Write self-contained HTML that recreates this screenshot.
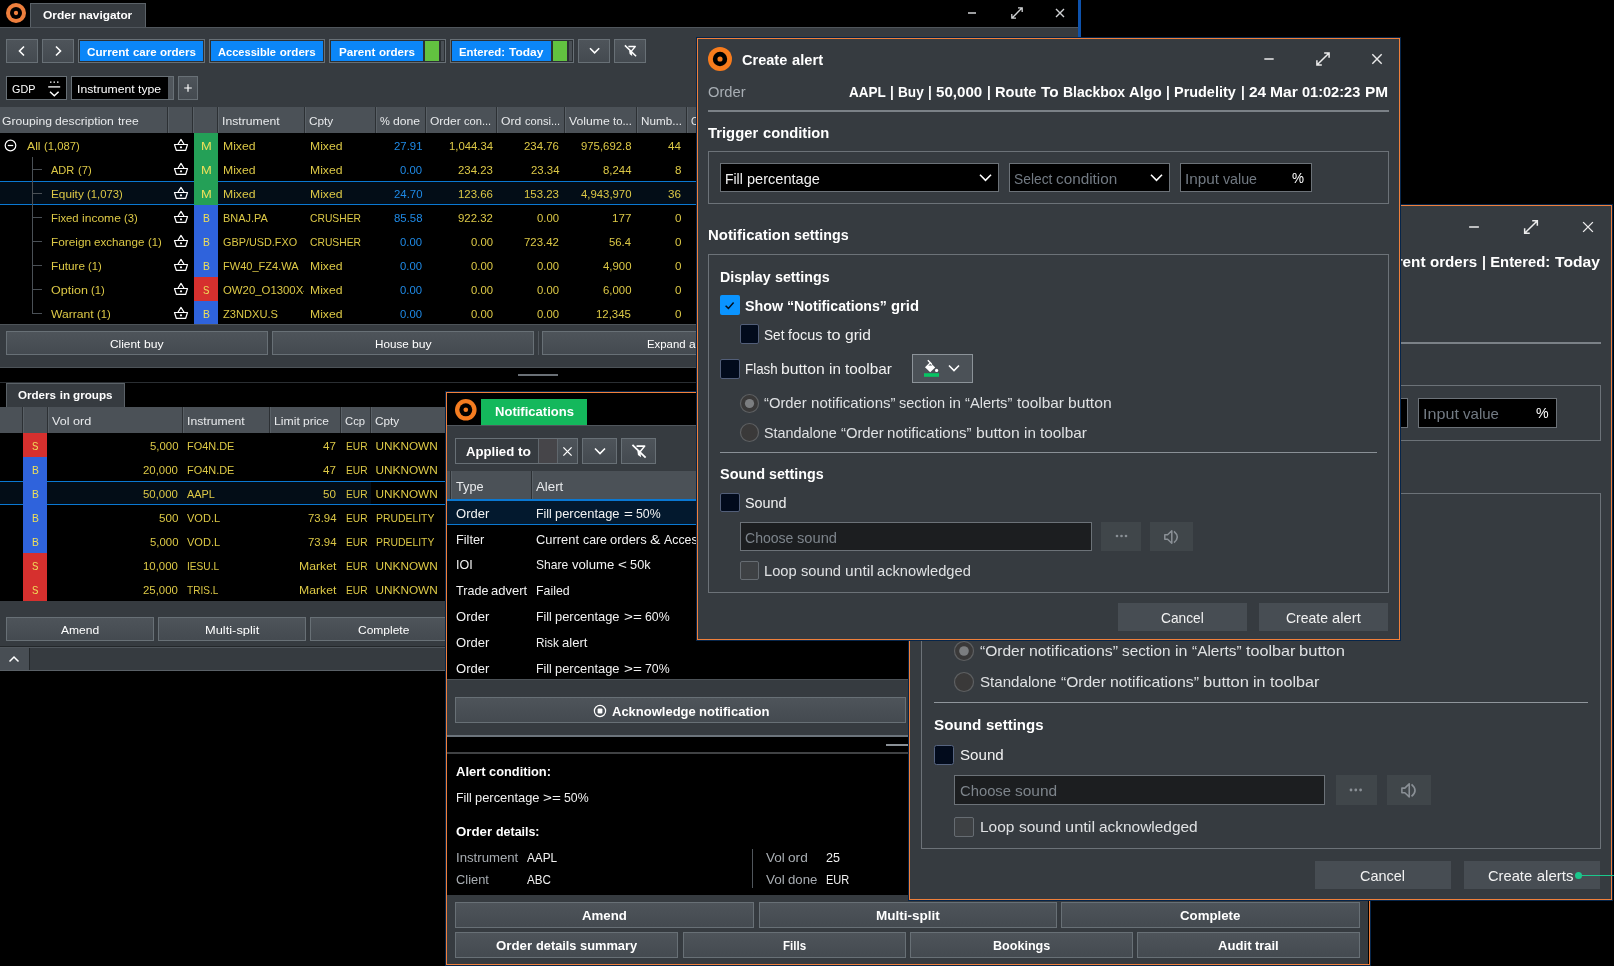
<!DOCTYPE html>
<html><head><meta charset="utf-8"><title>Order navigator</title><style>
html,body{margin:0;padding:0;background:#000;}
body{width:1614px;height:966px;overflow:hidden;position:relative;font-family:"Liberation Sans",sans-serif;color:#fff;}
div,span,svg{position:absolute;}
.win{position:absolute;will-change:transform;}
.t{white-space:pre;line-height:20px;height:20px;font-size:12px;color:#fff;transform-origin:0 50%;}
.t .in{position:relative;display:inline-block;}
.b{font-weight:bold;}
.g{font-size:11.80px;}
.f12{font-size:11.60px;}
.f12c{font-size:11.60px;}
.f12o{font-size:11.60px;}
.n{font-size:12.70px;}
.f13n{font-size:12.50px;}
.d1{font-size:14.30px;}
.d1b{font-size:14.10px;}
.d1t{font-size:14.10px;}
.d2{font-size:15.00px;}
.d2b{font-size:14.80px;}
</style></head><body>
<div class="win" style="left:0;top:0;width:1614px;height:966px;">
<svg style="left:5px;top:2px" width="22" height="22" viewBox="-11 -11 22 22"><circle r="10" fill="#ee7f3d"/><circle r="6.00" fill="#000"/><circle r="2.15" fill="#ee7f3d"/></svg>
<div style="left:30px;top:3px;width:116px;height:25px;background:#363b40;border:1px solid #5b6268;box-sizing:border-box;border-bottom:none;"></div>
<span class="t b f12" style="top:5px;left:43.00px;transform:scaleX(1.037);">Order</span>
<span class="t b f12" style="top:5px;left:79.24px;transform:scaleX(1.020);">navigator</span>
<svg style="left:966.2px;top:7px" width="12" height="12" viewBox="0 0 12 12"><path d="M2.0 6 H10.0" stroke="#d0d2d4" stroke-width="1.5"/></svg>
<svg style="left:1008.5px;top:5px" width="16" height="16" viewBox="0 0 16 16"><path d="M2.8 13.2 L13.2 2.8 M9.0 2.8 H13.2 V7.0 M2.8 9.0 V13.2 H7.0" fill="none" stroke="#d0d2d4" stroke-width="1.3"/></svg>
<svg style="left:1054.2px;top:7px" width="12" height="12" viewBox="0 0 12 12"><path d="M2.0 2.0 L10.0 10.0 M10.0 2.0 L2.0 10.0" stroke="#d0d2d4" stroke-width="1.4"/></svg>
<div style="left:1078px;top:0px;width:3px;height:37px;background:#0e52ac;"></div>
<div style="left:0px;top:27px;width:1078px;height:81px;background:#363b40;"></div>
<div style="left:0px;top:27px;width:1078px;height:1px;background:#50565c;"></div>
<div style="left:6px;top:39px;width:32px;height:24px;border:1px solid #687076;box-sizing:border-box;background:linear-gradient(#4e545a,#444a50);"></div>
<div style="left:42px;top:39px;width:32px;height:24px;border:1px solid #687076;box-sizing:border-box;background:linear-gradient(#4e545a,#444a50);"></div>
<svg style="left:16px;top:45px" width="12" height="12" viewBox="0 0 12 12"><path d="M8 1.5 L3.5 6 L8 10.5" fill="none" stroke="#fff" stroke-width="1.6"/></svg>
<svg style="left:52px;top:45px" width="12" height="12" viewBox="0 0 12 12"><path d="M4 1.5 L8.5 6 L4 10.5" fill="none" stroke="#fff" stroke-width="1.6"/></svg>
<div style="left:78px;top:39px;width:127px;height:24px;background:#2b3034;border:1px solid #687076;box-sizing:border-box;"></div>
<div style="left:80px;top:41px;width:123px;height:20px;background:#0b86f8;"></div>
<span class="t b f12c" style="top:42px;left:87.08px;transform:scaleX(1.009);">Current</span>
<span class="t b f12c" style="top:42px;left:132.86px;transform:scaleX(0.986);">care</span>
<span class="t b f12c" style="top:42px;left:159.90px;">orders</span>
<div style="left:209px;top:39px;width:116px;height:24px;background:#2b3034;border:1px solid #687076;box-sizing:border-box;"></div>
<div style="left:211px;top:41px;width:112px;height:20px;background:#0b86f8;"></div>
<span class="t b f12c" style="top:42px;left:218.26px;transform:scaleX(0.956);">Accessible</span>
<span class="t b f12c" style="top:42px;left:279.72px;">orders</span>
<div style="left:329px;top:39px;width:117px;height:24px;background:#2b3034;border:1px solid #687076;box-sizing:border-box;"></div>
<div style="left:331px;top:41px;width:92px;height:20px;background:#0b86f8;"></div>
<div style="left:425px;top:41px;width:14px;height:20px;background:#62c240;"></div>
<div style="left:441px;top:41px;width:3px;height:20px;background:#4a5056;"></div>
<span class="t b f12c" style="top:42px;left:339.07px;transform:scaleX(1.007);">Parent</span>
<span class="t b f12c" style="top:42px;left:378.91px;">orders</span>
<div style="left:450px;top:39px;width:124px;height:24px;background:#2b3034;border:1px solid #687076;box-sizing:border-box;"></div>
<div style="left:452px;top:41px;width:99px;height:20px;background:#0b86f8;"></div>
<div style="left:553px;top:41px;width:14px;height:20px;background:#62c240;"></div>
<div style="left:569px;top:41px;width:3px;height:20px;background:#4a5056;"></div>
<span class="t b f12c" style="top:42px;left:459.49px;transform:scaleX(0.980);">Entered:</span>
<span class="t b f12c" style="top:42px;left:509.13px;transform:scaleX(1.032);">Today</span>
<div style="left:578px;top:39px;width:32px;height:24px;border:1px solid #687076;box-sizing:border-box;background:linear-gradient(#4e545a,#444a50);"></div>
<svg style="left:587.8px;top:44.4px" width="13.2" height="13.2" viewBox="0 0 13.2 13.2"><path d="M2 4.3 L6.6 8.899999999999999 L11.2 4.3" fill="none" stroke="#fff" stroke-width="1.6"/></svg>
<div style="left:614px;top:39px;width:32px;height:24px;border:1px solid #687076;box-sizing:border-box;background:linear-gradient(#4e545a,#444a50);"></div>
<svg style="left:622.0px;top:43.0px" width="16.0" height="16.0" viewBox="0 0 16 16"><path d="M6.4 3.5 H13.3 L9.4 8.2" fill="none" stroke="#fff" stroke-width="1.3" stroke-linejoin="round"/><path d="M7.1 7.7 L9.7 7.9 L10.2 12.9 L7.6 11 Z" fill="#fff"/><path d="M2.9 2.4 L14.1 13.3" stroke="#fff" stroke-width="1.5"/></svg>
<div style="left:6px;top:76px;width:61px;height:24px;background:#000;border:1px solid #687076;box-sizing:border-box;"></div>
<span class="t g" style="top:79px;left:12.00px;transform:scaleX(0.914);">GDP</span>
<svg style="left:47px;top:80px" width="14" height="18" viewBox="0 0 14 18"><path d="M3 2.2h1.5M6.5 2.2h1.5M10 2.2h1.5" stroke="#fff" stroke-width="1.3"/><path d="M1.2 6.9 H13.2" stroke="#fff" stroke-width="1.3"/><path d="M3 11.8 L7.3 15.8 L11.6 11.8" fill="none" stroke="#fff" stroke-width="1.5"/></svg>
<div style="left:71px;top:76px;width:103px;height:24px;background:#000;border:1px solid #687076;box-sizing:border-box;"></div>
<div style="left:168px;top:77px;width:5px;height:22px;background:#50565c;"></div>
<span class="t g" style="top:78.5px;left:77.00px;transform:scaleX(1.033);">Instrument</span>
<span class="t g" style="top:78.5px;left:137.85px;transform:scaleX(1.040);">type</span>
<div style="left:178px;top:76px;width:20px;height:24px;border:1px solid #687076;box-sizing:border-box;background:linear-gradient(#4e545a,#444a50);"></div>
<svg style="left:182.1px;top:81.8px" width="12" height="12" viewBox="0 0 12 12"><path d="M6 2.2 V9.8 M2.2 6 H9.8" stroke="#fff" stroke-width="1.2"/></svg>
<div style="left:0px;top:107px;width:1078px;height:26px;background:#4b5157;"></div>
<div style="left:167px;top:107px;width:1px;height:26px;background:#2c3034;"></div>
<div style="left:168px;top:107px;width:1px;height:26px;background:#596066;"></div>
<div style="left:192px;top:107px;width:1px;height:26px;background:#2c3034;"></div>
<div style="left:193px;top:107px;width:1px;height:26px;background:#596066;"></div>
<div style="left:217px;top:107px;width:1px;height:26px;background:#2c3034;"></div>
<div style="left:218px;top:107px;width:1px;height:26px;background:#596066;"></div>
<div style="left:304px;top:107px;width:1px;height:26px;background:#2c3034;"></div>
<div style="left:305px;top:107px;width:1px;height:26px;background:#596066;"></div>
<div style="left:375px;top:107px;width:1px;height:26px;background:#2c3034;"></div>
<div style="left:376px;top:107px;width:1px;height:26px;background:#596066;"></div>
<div style="left:425px;top:107px;width:1px;height:26px;background:#2c3034;"></div>
<div style="left:426px;top:107px;width:1px;height:26px;background:#596066;"></div>
<div style="left:496px;top:107px;width:1px;height:26px;background:#2c3034;"></div>
<div style="left:497px;top:107px;width:1px;height:26px;background:#596066;"></div>
<div style="left:564px;top:107px;width:1px;height:26px;background:#2c3034;"></div>
<div style="left:565px;top:107px;width:1px;height:26px;background:#596066;"></div>
<div style="left:636px;top:107px;width:1px;height:26px;background:#2c3034;"></div>
<div style="left:637px;top:107px;width:1px;height:26px;background:#596066;"></div>
<div style="left:686px;top:107px;width:1px;height:26px;background:#2c3034;"></div>
<div style="left:687px;top:107px;width:1px;height:26px;background:#596066;"></div>
<span class="t g" style="top:111px;left:2.00px;color:#e8eaec;transform:scaleX(1.031);">Grouping</span>
<span class="t g" style="top:111px;left:55.33px;color:#e8eaec;transform:scaleX(1.032);">description</span>
<span class="t g" style="top:111px;left:117.52px;color:#e8eaec;transform:scaleX(1.023);">tree</span>
<span class="t g" style="top:111px;left:222.00px;color:#e8eaec;transform:scaleX(1.033);">Instrument</span>
<span class="t g" style="top:111px;left:309.00px;color:#e8eaec;">Cpty</span>
<span class="t g" style="top:111px;left:380.00px;color:#e8eaec;transform:scaleX(0.936);">%</span>
<span class="t g" style="top:111px;left:393.11px;color:#e8eaec;transform:scaleX(1.035);">done</span>
<span class="t g" style="top:111px;left:430.00px;color:#e8eaec;transform:scaleX(1.019);">Order</span>
<span class="t g" style="top:111px;left:464.03px;color:#e8eaec;transform:scaleX(0.941);">con...</span>
<span class="t g" style="top:111px;left:501.00px;color:#e8eaec;transform:scaleX(1.032);">Ord</span>
<span class="t g" style="top:111px;left:524.58px;color:#e8eaec;transform:scaleX(0.941);">consi...</span>
<span class="t g" style="top:111px;left:569.00px;color:#e8eaec;transform:scaleX(1.037);">Volume</span>
<span class="t g" style="top:111px;left:613.10px;color:#e8eaec;transform:scaleX(0.961);">to...</span>
<span class="t g" style="top:111px;left:641.00px;color:#e8eaec;transform:scaleX(0.991);">Numb...</span>
<span class="t g" style="top:111px;left:691.00px;color:#e8eaec;transform:scaleX(0.872);">C</span>
<div style="left:0px;top:133px;width:1077px;height:192px;background:#000;"></div>
<svg style="left:4px;top:139px" width="13" height="13" viewBox="0 0 13 13"><circle cx="6.5" cy="6.5" r="5.3" fill="none" stroke="#fff" stroke-width="1.2"/><path d="M3.8 6.5 H9.2" stroke="#fff" stroke-width="1.2"/></svg>
<span class="t g" style="top:136px;left:27.00px;color:#dcc846;transform:scaleX(1.033);">All</span>
<span class="t g" style="top:136px;left:43.84px;color:#dcc846;transform:scaleX(0.955);">(1,087)</span>
<svg style="left:173.3px;top:137.7px" width="16" height="14" viewBox="0 0 16 14"><path d="M1.5 6.5 H14.5 L12.7 12.3 H3.3 Z M4.8 6.5 L8 1.4 L11.2 6.5" fill="none" stroke="#fff" stroke-width="1.2" stroke-linejoin="round"/><circle cx="8" cy="9.3" r="1.1" fill="#fff"/></svg>
<div style="left:194px;top:133px;width:24px;height:24px;background:#24a057;"></div>
<span class="t g" style="top:136px;left:201.22px;color:#efe05a;transform:scaleX(1.096);">M</span>
<span class="t g" style="top:136px;left:223px;color:#dcc846;width:81px;overflow:hidden;"><span class="in" style="transform:scaleX(1.033);transform-origin:0 50%;">Mixed</span></span>
<span class="t g" style="top:136px;left:310.00px;color:#dcc846;transform:scaleX(1.033);">Mixed</span>
<span class="t g" style="top:136px;left:393.52px;color:#1f8ae6;transform:scaleX(0.964);">27.91</span>
<span class="t g" style="top:136px;left:448.98px;color:#dcc846;transform:scaleX(0.958);">1,044.34</span>
<span class="t g" style="top:136px;left:524.05px;color:#dcc846;transform:scaleX(0.968);">234.76</span>
<span class="t g" style="top:136px;left:580.52px;color:#dcc846;transform:scaleX(0.962);">975,692.8</span>
<span class="t g" style="top:136px;left:668.06px;color:#dcc846;transform:scaleX(0.986);">44</span>
<div style="left:32px;top:157px;width:1px;height:24px;background:#4a5056;"></div>
<div style="left:32px;top:169px;width:10px;height:1px;background:#4a5056;"></div>
<span class="t g" style="top:160px;left:51.00px;color:#dcc846;transform:scaleX(0.937);">ADR</span>
<span class="t g" style="top:160px;left:77.62px;color:#dcc846;transform:scaleX(0.951);">(7)</span>
<svg style="left:173.3px;top:161.7px" width="16" height="14" viewBox="0 0 16 14"><path d="M1.5 6.5 H14.5 L12.7 12.3 H3.3 Z M4.8 6.5 L8 1.4 L11.2 6.5" fill="none" stroke="#fff" stroke-width="1.2" stroke-linejoin="round"/><circle cx="8" cy="9.3" r="1.1" fill="#fff"/></svg>
<div style="left:194px;top:157px;width:24px;height:24px;background:#24a057;"></div>
<span class="t g" style="top:160px;left:201.22px;color:#efe05a;transform:scaleX(1.096);">M</span>
<span class="t g" style="top:160px;left:223px;color:#dcc846;width:81px;overflow:hidden;"><span class="in" style="transform:scaleX(1.033);transform-origin:0 50%;">Mixed</span></span>
<span class="t g" style="top:160px;left:310.00px;color:#dcc846;transform:scaleX(1.033);">Mixed</span>
<span class="t g" style="top:160px;left:399.99px;color:#1f8ae6;transform:scaleX(0.958);">0.00</span>
<span class="t g" style="top:160px;left:458.05px;color:#dcc846;transform:scaleX(0.968);">234.23</span>
<span class="t g" style="top:160px;left:530.52px;color:#dcc846;transform:scaleX(0.964);">23.34</span>
<span class="t g" style="top:160px;left:602.52px;color:#dcc846;transform:scaleX(0.964);">8,244</span>
<span class="t g" style="top:160px;left:674.53px;color:#dcc846;transform:scaleX(0.986);">8</span>
<div style="left:0px;top:181px;width:1077px;height:24px;background:#030d17;"></div>
<div style="left:0px;top:181px;width:1077px;height:1px;background:#0a78d2;"></div>
<div style="left:0px;top:204px;width:1077px;height:1px;background:#0a78d2;"></div>
<div style="left:32px;top:181px;width:1px;height:24px;background:#4a5056;"></div>
<div style="left:32px;top:193px;width:10px;height:1px;background:#4a5056;"></div>
<span class="t g" style="top:184px;left:51.00px;color:#dcc846;">Equity</span>
<span class="t g" style="top:184px;left:86.97px;color:#dcc846;transform:scaleX(0.955);">(1,073)</span>
<svg style="left:173.3px;top:185.7px" width="16" height="14" viewBox="0 0 16 14"><path d="M1.5 6.5 H14.5 L12.7 12.3 H3.3 Z M4.8 6.5 L8 1.4 L11.2 6.5" fill="none" stroke="#fff" stroke-width="1.2" stroke-linejoin="round"/><circle cx="8" cy="9.3" r="1.1" fill="#fff"/></svg>
<div style="left:194px;top:181px;width:24px;height:24px;background:#24a057;"></div>
<span class="t g" style="top:184px;left:201.22px;color:#efe05a;transform:scaleX(1.096);">M</span>
<span class="t g" style="top:184px;left:223px;color:#dcc846;width:81px;overflow:hidden;"><span class="in" style="transform:scaleX(1.033);transform-origin:0 50%;">Mixed</span></span>
<span class="t g" style="top:184px;left:310.00px;color:#dcc846;transform:scaleX(1.033);">Mixed</span>
<span class="t g" style="top:184px;left:393.52px;color:#1f8ae6;transform:scaleX(0.964);">24.70</span>
<span class="t g" style="top:184px;left:458.05px;color:#dcc846;transform:scaleX(0.968);">123.66</span>
<span class="t g" style="top:184px;left:524.05px;color:#dcc846;transform:scaleX(0.968);">153.23</span>
<span class="t g" style="top:184px;left:580.52px;color:#dcc846;transform:scaleX(0.962);">4,943,970</span>
<span class="t g" style="top:184px;left:668.06px;color:#dcc846;transform:scaleX(0.986);">36</span>
<div style="left:32px;top:205px;width:1px;height:24px;background:#4a5056;"></div>
<div style="left:32px;top:217px;width:10px;height:1px;background:#4a5056;"></div>
<span class="t g" style="top:208px;left:51.00px;color:#dcc846;transform:scaleX(0.957);">Fixed</span>
<span class="t g" style="top:208px;left:81.89px;color:#dcc846;transform:scaleX(1.022);">income</span>
<span class="t g" style="top:208px;left:124.05px;color:#dcc846;transform:scaleX(0.951);">(3)</span>
<svg style="left:173.3px;top:209.7px" width="16" height="14" viewBox="0 0 16 14"><path d="M1.5 6.5 H14.5 L12.7 12.3 H3.3 Z M4.8 6.5 L8 1.4 L11.2 6.5" fill="none" stroke="#fff" stroke-width="1.2" stroke-linejoin="round"/><circle cx="8" cy="9.3" r="1.1" fill="#fff"/></svg>
<div style="left:194px;top:205px;width:24px;height:24px;background:#2f63dc;"></div>
<span class="t g" style="top:208px;left:203.16px;color:#efe05a;transform:scaleX(0.874);">B</span>
<span class="t g" style="top:208px;left:223px;color:#dcc846;width:81px;overflow:hidden;"><span class="in" style="transform:scaleX(0.930);transform-origin:0 50%;">BNAJ.PA</span></span>
<span class="t g" style="top:208px;left:310.00px;color:#dcc846;transform:scaleX(0.874);">CRUSHER</span>
<span class="t g" style="top:208px;left:393.52px;color:#1f8ae6;transform:scaleX(0.964);">85.58</span>
<span class="t g" style="top:208px;left:458.05px;color:#dcc846;transform:scaleX(0.968);">922.32</span>
<span class="t g" style="top:208px;left:536.99px;color:#dcc846;transform:scaleX(0.958);">0.00</span>
<span class="t g" style="top:208px;left:611.59px;color:#dcc846;transform:scaleX(0.986);">177</span>
<span class="t g" style="top:208px;left:674.53px;color:#dcc846;transform:scaleX(0.986);">0</span>
<div style="left:32px;top:229px;width:1px;height:24px;background:#4a5056;"></div>
<div style="left:32px;top:241px;width:10px;height:1px;background:#4a5056;"></div>
<span class="t g" style="top:232px;left:51.00px;color:#dcc846;">Foreign</span>
<span class="t g" style="top:232px;left:94.38px;color:#dcc846;transform:scaleX(0.984);">exchange</span>
<span class="t g" style="top:232px;left:148.01px;color:#dcc846;transform:scaleX(0.951);">(1)</span>
<svg style="left:173.3px;top:233.7px" width="16" height="14" viewBox="0 0 16 14"><path d="M1.5 6.5 H14.5 L12.7 12.3 H3.3 Z M4.8 6.5 L8 1.4 L11.2 6.5" fill="none" stroke="#fff" stroke-width="1.2" stroke-linejoin="round"/><circle cx="8" cy="9.3" r="1.1" fill="#fff"/></svg>
<div style="left:194px;top:229px;width:24px;height:24px;background:#2f63dc;"></div>
<span class="t g" style="top:232px;left:203.16px;color:#efe05a;transform:scaleX(0.874);">B</span>
<span class="t g" style="top:232px;left:223px;color:#dcc846;width:81px;overflow:hidden;"><span class="in" style="transform:scaleX(0.919);transform-origin:0 50%;">GBP/USD.FXO</span></span>
<span class="t g" style="top:232px;left:310.00px;color:#dcc846;transform:scaleX(0.874);">CRUSHER</span>
<span class="t g" style="top:232px;left:399.99px;color:#1f8ae6;transform:scaleX(0.958);">0.00</span>
<span class="t g" style="top:232px;left:470.99px;color:#dcc846;transform:scaleX(0.958);">0.00</span>
<span class="t g" style="top:232px;left:524.05px;color:#dcc846;transform:scaleX(0.968);">723.42</span>
<span class="t g" style="top:232px;left:608.99px;color:#dcc846;transform:scaleX(0.958);">56.4</span>
<span class="t g" style="top:232px;left:674.53px;color:#dcc846;transform:scaleX(0.986);">0</span>
<div style="left:32px;top:253px;width:1px;height:24px;background:#4a5056;"></div>
<div style="left:32px;top:265px;width:10px;height:1px;background:#4a5056;"></div>
<span class="t g" style="top:256px;left:51.00px;color:#dcc846;transform:scaleX(0.995);">Future</span>
<span class="t g" style="top:256px;left:88.22px;color:#dcc846;transform:scaleX(0.951);">(1)</span>
<svg style="left:173.3px;top:257.7px" width="16" height="14" viewBox="0 0 16 14"><path d="M1.5 6.5 H14.5 L12.7 12.3 H3.3 Z M4.8 6.5 L8 1.4 L11.2 6.5" fill="none" stroke="#fff" stroke-width="1.2" stroke-linejoin="round"/><circle cx="8" cy="9.3" r="1.1" fill="#fff"/></svg>
<div style="left:194px;top:253px;width:24px;height:24px;background:#2f63dc;"></div>
<span class="t g" style="top:256px;left:203.16px;color:#efe05a;transform:scaleX(0.874);">B</span>
<span class="t g" style="top:256px;left:223px;color:#dcc846;width:81px;overflow:hidden;"><span class="in" style="transform:scaleX(0.936);transform-origin:0 50%;">FW40_FZ4.WA</span></span>
<span class="t g" style="top:256px;left:310.00px;color:#dcc846;transform:scaleX(1.033);">Mixed</span>
<span class="t g" style="top:256px;left:399.99px;color:#1f8ae6;transform:scaleX(0.958);">0.00</span>
<span class="t g" style="top:256px;left:470.99px;color:#dcc846;transform:scaleX(0.958);">0.00</span>
<span class="t g" style="top:256px;left:536.99px;color:#dcc846;transform:scaleX(0.958);">0.00</span>
<span class="t g" style="top:256px;left:602.52px;color:#dcc846;transform:scaleX(0.964);">4,900</span>
<span class="t g" style="top:256px;left:674.53px;color:#dcc846;transform:scaleX(0.986);">0</span>
<div style="left:32px;top:277px;width:1px;height:24px;background:#4a5056;"></div>
<div style="left:32px;top:289px;width:10px;height:1px;background:#4a5056;"></div>
<span class="t g" style="top:280px;left:51.00px;color:#dcc846;transform:scaleX(1.061);">Option</span>
<span class="t g" style="top:280px;left:91.18px;color:#dcc846;transform:scaleX(0.951);">(1)</span>
<svg style="left:173.3px;top:281.7px" width="16" height="14" viewBox="0 0 16 14"><path d="M1.5 6.5 H14.5 L12.7 12.3 H3.3 Z M4.8 6.5 L8 1.4 L11.2 6.5" fill="none" stroke="#fff" stroke-width="1.2" stroke-linejoin="round"/><circle cx="8" cy="9.3" r="1.1" fill="#fff"/></svg>
<div style="left:194px;top:277px;width:24px;height:24px;background:#d6302e;"></div>
<span class="t g" style="top:280px;left:203.42px;color:#efe05a;transform:scaleX(0.809);">S</span>
<span class="t g" style="top:280px;left:223px;color:#dcc846;width:81px;overflow:hidden;"><span class="in" style="transform:scaleX(0.964);transform-origin:0 50%;">OW20_O1300X4</span></span>
<span class="t g" style="top:280px;left:310.00px;color:#dcc846;transform:scaleX(1.033);">Mixed</span>
<span class="t g" style="top:280px;left:399.99px;color:#1f8ae6;transform:scaleX(0.958);">0.00</span>
<span class="t g" style="top:280px;left:470.99px;color:#dcc846;transform:scaleX(0.958);">0.00</span>
<span class="t g" style="top:280px;left:536.99px;color:#dcc846;transform:scaleX(0.958);">0.00</span>
<span class="t g" style="top:280px;left:602.52px;color:#dcc846;transform:scaleX(0.964);">6,000</span>
<span class="t g" style="top:280px;left:674.53px;color:#dcc846;transform:scaleX(0.986);">0</span>
<div style="left:32px;top:301px;width:1px;height:12px;background:#4a5056;"></div>
<div style="left:32px;top:313px;width:10px;height:1px;background:#4a5056;"></div>
<span class="t g" style="top:304px;left:51.00px;color:#dcc846;transform:scaleX(1.026);">Warrant</span>
<span class="t g" style="top:304px;left:96.91px;color:#dcc846;transform:scaleX(0.951);">(1)</span>
<svg style="left:173.3px;top:305.7px" width="16" height="14" viewBox="0 0 16 14"><path d="M1.5 6.5 H14.5 L12.7 12.3 H3.3 Z M4.8 6.5 L8 1.4 L11.2 6.5" fill="none" stroke="#fff" stroke-width="1.2" stroke-linejoin="round"/><circle cx="8" cy="9.3" r="1.1" fill="#fff"/></svg>
<div style="left:194px;top:301px;width:24px;height:24px;background:#2f63dc;"></div>
<span class="t g" style="top:304px;left:203.16px;color:#efe05a;transform:scaleX(0.874);">B</span>
<span class="t g" style="top:304px;left:223px;color:#dcc846;width:81px;overflow:hidden;"><span class="in" style="transform:scaleX(0.942);transform-origin:0 50%;">Z3NDXU.S</span></span>
<span class="t g" style="top:304px;left:310.00px;color:#dcc846;transform:scaleX(1.033);">Mixed</span>
<span class="t g" style="top:304px;left:399.99px;color:#1f8ae6;transform:scaleX(0.958);">0.00</span>
<span class="t g" style="top:304px;left:470.99px;color:#dcc846;transform:scaleX(0.958);">0.00</span>
<span class="t g" style="top:304px;left:536.99px;color:#dcc846;transform:scaleX(0.958);">0.00</span>
<span class="t g" style="top:304px;left:596.05px;color:#dcc846;transform:scaleX(0.968);">12,345</span>
<span class="t g" style="top:304px;left:674.53px;color:#dcc846;transform:scaleX(0.986);">0</span>
<div style="left:0px;top:324px;width:1077px;height:44px;background:#363b40;"></div>
<div style="left:0px;top:324px;width:1077px;height:1px;background:#4d5358;"></div>
<div style="left:0px;top:367px;width:1077px;height:1px;background:#4d5358;"></div>
<div style="left:6px;top:331px;width:262px;height:24px;border:1px solid #687076;box-sizing:border-box;background:linear-gradient(#4e545a,#444a50);"></div>
<span class="t g" style="top:334px;left:110.36px;transform:scaleX(1.007);">Client</span>
<span class="t g" style="top:334px;left:144.01px;transform:scaleX(1.032);">buy</span>
<div style="left:272px;top:331px;width:262px;height:24px;border:1px solid #687076;box-sizing:border-box;background:linear-gradient(#4e545a,#444a50);"></div>
<span class="t g" style="top:334px;left:374.69px;transform:scaleX(0.988);">House</span>
<span class="t g" style="top:334px;left:411.68px;transform:scaleX(1.032);">buy</span>
<div style="left:538px;top:331px;width:1px;height:24px;background:#50565c;"></div>
<div style="left:542px;top:331px;width:264px;height:24px;border:1px solid #687076;box-sizing:border-box;background:linear-gradient(#4e545a,#444a50);"></div>
<span class="t g" style="top:334px;left:647.10px;transform:scaleX(0.964);">Expand</span>
<span class="t g" style="top:334px;left:688.98px;transform:scaleX(1.009);">all</span>
<div style="left:518px;top:374px;width:40px;height:2px;background:#6a7076;"></div>
<div style="left:0px;top:382px;width:1077px;height:1px;background:#2a2e32;"></div>
<div style="left:6px;top:383px;width:119px;height:25px;background:#363b40;border:1px solid #5b6268;box-sizing:border-box;border-bottom:none;"></div>
<span class="t b f12o" style="top:385px;left:18.00px;">Orders</span>
<span class="t b f12o" style="top:385px;left:59.67px;">in</span>
<span class="t b f12o" style="top:385px;left:73.49px;transform:scaleX(1.008);">groups</span>
<div style="left:0px;top:407px;width:1078px;height:26px;background:#4b5157;"></div>
<div style="left:22px;top:407px;width:1px;height:26px;background:#2c3034;"></div>
<div style="left:23px;top:407px;width:1px;height:26px;background:#596066;"></div>
<div style="left:47px;top:407px;width:1px;height:26px;background:#2c3034;"></div>
<div style="left:48px;top:407px;width:1px;height:26px;background:#596066;"></div>
<div style="left:182px;top:407px;width:1px;height:26px;background:#2c3034;"></div>
<div style="left:183px;top:407px;width:1px;height:26px;background:#596066;"></div>
<div style="left:269px;top:407px;width:1px;height:26px;background:#2c3034;"></div>
<div style="left:270px;top:407px;width:1px;height:26px;background:#596066;"></div>
<div style="left:340px;top:407px;width:1px;height:26px;background:#2c3034;"></div>
<div style="left:341px;top:407px;width:1px;height:26px;background:#596066;"></div>
<div style="left:370px;top:407px;width:1px;height:26px;background:#2c3034;"></div>
<div style="left:371px;top:407px;width:1px;height:26px;background:#596066;"></div>
<span class="t g" style="top:411px;left:52.00px;color:#e8eaec;transform:scaleX(1.062);">Vol</span>
<span class="t g" style="top:411px;left:72.70px;color:#e8eaec;transform:scaleX(1.072);">ord</span>
<span class="t g" style="top:411px;left:187.00px;color:#e8eaec;transform:scaleX(1.033);">Instrument</span>
<span class="t g" style="top:411px;left:274.00px;color:#e8eaec;transform:scaleX(1.038);">Limit</span>
<span class="t g" style="top:411px;left:303.15px;color:#e8eaec;transform:scaleX(1.015);">price</span>
<span class="t g" style="top:411px;left:345.00px;color:#e8eaec;transform:scaleX(0.954);">Ccp</span>
<span class="t g" style="top:411px;left:375.00px;color:#e8eaec;">Cpty</span>
<div style="left:0px;top:433px;width:1077px;height:168px;background:#000;"></div>
<div style="left:23px;top:433px;width:24px;height:24px;background:#d6302e;"></div>
<span class="t g" style="top:436px;left:32.22px;color:#efe05a;transform:scaleX(0.809);">S</span>
<span class="t g" style="top:436px;left:149.52px;color:#dcc846;transform:scaleX(0.964);">5,000</span>
<span class="t g" style="top:436px;left:187.00px;color:#dcc846;transform:scaleX(0.927);">FO4N.DE</span>
<span class="t g" style="top:436px;left:323.06px;color:#dcc846;transform:scaleX(0.986);">47</span>
<span class="t g" style="top:436px;left:345.50px;color:#dcc846;transform:scaleX(0.863);">EUR</span>
<span class="t g" style="top:436px;left:375.50px;color:#dcc846;">UNKNOWN</span>
<div style="left:23px;top:457px;width:24px;height:24px;background:#2f63dc;"></div>
<span class="t g" style="top:460px;left:31.96px;color:#efe05a;transform:scaleX(0.874);">B</span>
<span class="t g" style="top:460px;left:143.05px;color:#dcc846;transform:scaleX(0.968);">20,000</span>
<span class="t g" style="top:460px;left:187.00px;color:#dcc846;transform:scaleX(0.927);">FO4N.DE</span>
<span class="t g" style="top:460px;left:323.06px;color:#dcc846;transform:scaleX(0.986);">47</span>
<span class="t g" style="top:460px;left:345.50px;color:#dcc846;transform:scaleX(0.863);">EUR</span>
<span class="t g" style="top:460px;left:375.50px;color:#dcc846;">UNKNOWN</span>
<div style="left:0px;top:481px;width:1077px;height:24px;background:#030d17;"></div>
<div style="left:371px;top:482px;width:80px;height:22px;background:#000;"></div>
<div style="left:0px;top:481px;width:1077px;height:1px;background:#0a78d2;"></div>
<div style="left:0px;top:504px;width:1077px;height:1px;background:#0a78d2;"></div>
<div style="left:23px;top:481px;width:24px;height:24px;background:#2f63dc;"></div>
<span class="t g" style="top:484px;left:31.96px;color:#efe05a;transform:scaleX(0.874);">B</span>
<span class="t g" style="top:484px;left:143.05px;color:#dcc846;transform:scaleX(0.968);">50,000</span>
<span class="t g" style="top:484px;left:187.00px;color:#dcc846;transform:scaleX(0.923);">AAPL</span>
<span class="t g" style="top:484px;left:323.06px;color:#dcc846;transform:scaleX(0.986);">50</span>
<span class="t g" style="top:484px;left:345.50px;color:#dcc846;transform:scaleX(0.863);">EUR</span>
<span class="t g" style="top:484px;left:375.50px;color:#dcc846;">UNKNOWN</span>
<div style="left:23px;top:505px;width:24px;height:24px;background:#2f63dc;"></div>
<span class="t g" style="top:508px;left:31.96px;color:#efe05a;transform:scaleX(0.874);">B</span>
<span class="t g" style="top:508px;left:158.59px;color:#dcc846;transform:scaleX(0.986);">500</span>
<span class="t g" style="top:508px;left:187.00px;color:#dcc846;transform:scaleX(0.937);">VOD.L</span>
<span class="t g" style="top:508px;left:307.52px;color:#dcc846;transform:scaleX(0.964);">73.94</span>
<span class="t g" style="top:508px;left:345.50px;color:#dcc846;transform:scaleX(0.863);">EUR</span>
<span class="t g" style="top:508px;left:375.50px;color:#dcc846;transform:scaleX(0.882);">PRUDELITY</span>
<div style="left:23px;top:529px;width:24px;height:24px;background:#2f63dc;"></div>
<span class="t g" style="top:532px;left:31.96px;color:#efe05a;transform:scaleX(0.874);">B</span>
<span class="t g" style="top:532px;left:149.52px;color:#dcc846;transform:scaleX(0.964);">5,000</span>
<span class="t g" style="top:532px;left:187.00px;color:#dcc846;transform:scaleX(0.937);">VOD.L</span>
<span class="t g" style="top:532px;left:307.52px;color:#dcc846;transform:scaleX(0.964);">73.94</span>
<span class="t g" style="top:532px;left:345.50px;color:#dcc846;transform:scaleX(0.863);">EUR</span>
<span class="t g" style="top:532px;left:375.50px;color:#dcc846;transform:scaleX(0.882);">PRUDELITY</span>
<div style="left:23px;top:553px;width:24px;height:24px;background:#d6302e;"></div>
<span class="t g" style="top:556px;left:32.22px;color:#efe05a;transform:scaleX(0.809);">S</span>
<span class="t g" style="top:556px;left:143.05px;color:#dcc846;transform:scaleX(0.968);">10,000</span>
<span class="t g" style="top:556px;left:187.00px;color:#dcc846;transform:scaleX(0.859);">IESU.L</span>
<span class="t g" style="top:556px;left:298.65px;color:#dcc846;transform:scaleX(1.036);">Market</span>
<span class="t g" style="top:556px;left:345.50px;color:#dcc846;transform:scaleX(0.863);">EUR</span>
<span class="t g" style="top:556px;left:375.50px;color:#dcc846;">UNKNOWN</span>
<div style="left:23px;top:577px;width:24px;height:24px;background:#d6302e;"></div>
<span class="t g" style="top:580px;left:32.22px;color:#efe05a;transform:scaleX(0.809);">S</span>
<span class="t g" style="top:580px;left:143.05px;color:#dcc846;transform:scaleX(0.968);">25,000</span>
<span class="t g" style="top:580px;left:187.00px;color:#dcc846;transform:scaleX(0.852);">TRIS.L</span>
<span class="t g" style="top:580px;left:298.65px;color:#dcc846;transform:scaleX(1.036);">Market</span>
<span class="t g" style="top:580px;left:345.50px;color:#dcc846;transform:scaleX(0.863);">EUR</span>
<span class="t g" style="top:580px;left:375.50px;color:#dcc846;">UNKNOWN</span>
<div style="left:0px;top:601px;width:1077px;height:70px;background:#363b40;"></div>
<div style="left:6px;top:617px;width:148px;height:24px;border:1px solid #687076;box-sizing:border-box;background:linear-gradient(#4e545a,#444a50);"></div>
<span class="t g" style="top:620px;left:60.90px;transform:scaleX(1.022);">Amend</span>
<div style="left:158px;top:617px;width:148px;height:24px;border:1px solid #687076;box-sizing:border-box;background:linear-gradient(#4e545a,#444a50);"></div>
<span class="t g" style="top:620px;left:204.87px;transform:scaleX(1.089);">Multi-split</span>
<div style="left:310px;top:617px;width:148px;height:24px;border:1px solid #687076;box-sizing:border-box;background:linear-gradient(#4e545a,#444a50);"></div>
<span class="t g" style="top:620px;left:358.31px;transform:scaleX(1.017);">Complete</span>
<div style="left:0px;top:646px;width:1077px;height:1px;background:#23272a;"></div>
<div style="left:0px;top:647px;width:1077px;height:1px;background:#50565c;"></div>
<div style="left:0px;top:648px;width:29px;height:22px;background:#484e54;"></div>
<div style="left:29px;top:648px;width:1px;height:22px;background:#23272a;"></div>
<div style="left:0px;top:670px;width:1078px;height:1px;background:#5a6167;"></div>
<svg style="left:8px;top:653px" width="12" height="12" viewBox="0 0 12 12"><path d="M1.5 8.5 L6 4 L10.5 8.5" fill="none" stroke="#fff" stroke-width="1.5"/></svg>
</div>
<div class="win" style="left:446px;top:392px;width:924px;height:573px;background:#000;border:1px solid #f0803c;box-sizing:border-box;outline:1px solid #06254a;overflow:hidden;">
<div class="win" style="left:-447px;top:-393px;width:1614px;height:966px;">
<svg style="left:454.0px;top:398.2px" width="23.6" height="23.6" viewBox="-11.8 -11.8 23.6 23.6"><circle r="10.8" fill="#f47c20"/><circle r="6.48" fill="#000"/><circle r="2.32" fill="#f47c20"/></svg>
<div style="left:481px;top:399px;width:106px;height:26px;background:#14b85c;"></div>
<span class="t b f13n" style="top:402px;left:495.02px;transform:scaleX(1.043);">Notifications</span>
<div style="left:447px;top:425px;width:921px;height:46px;background:#363b40;"></div>
<div style="left:447px;top:425px;width:921px;height:1px;background:#50565c;"></div>
<div style="left:455px;top:438px;width:123px;height:26px;background:#363b40;border:1px solid #687076;box-sizing:border-box;"></div>
<div style="left:538px;top:439px;width:1px;height:24px;background:#60676d;"></div>
<div style="left:539px;top:439px;width:18px;height:24px;background:#464549;"></div>
<div style="left:557px;top:439px;width:1px;height:24px;background:#60676d;"></div>
<div style="left:558px;top:439px;width:19px;height:24px;background:linear-gradient(#4e545a,#444a50);"></div>
<span class="t b f13n" style="top:441.5px;left:465.75px;transform:scaleX(1.052);">Applied</span>
<span class="t b f13n" style="top:441.5px;left:517.81px;transform:scaleX(1.106);">to</span>
<svg style="left:561px;top:444.5px" width="13" height="13" viewBox="0 0 13 13"><path d="M2.4 2.4 L10.6 10.6 M10.6 2.4 L2.4 10.6" stroke="#fff" stroke-width="1.3"/></svg>
<div style="left:582px;top:438px;width:35px;height:26px;border:1px solid #687076;box-sizing:border-box;background:linear-gradient(#4e545a,#444a50);"></div>
<svg style="left:592.7px;top:443.5px" width="14" height="14" viewBox="0 0 14 14"><path d="M2 4.5 L7 9.5 L12 4.5" fill="none" stroke="#fff" stroke-width="1.6"/></svg>
<div style="left:621px;top:438px;width:35px;height:26px;border:1px solid #687076;box-sizing:border-box;background:linear-gradient(#4e545a,#444a50);"></div>
<svg style="left:629.06px;top:441.56px" width="18.88" height="18.88" viewBox="0 0 16 16"><path d="M6.4 3.5 H13.3 L9.4 8.2" fill="none" stroke="#fff" stroke-width="1.3" stroke-linejoin="round"/><path d="M7.1 7.7 L9.7 7.9 L10.2 12.9 L7.6 11 Z" fill="#fff"/><path d="M2.9 2.4 L14.1 13.3" stroke="#fff" stroke-width="1.5"/></svg>
<div style="left:447px;top:471px;width:921px;height:28px;background:#4b5157;"></div>
<div style="left:450px;top:471px;width:1px;height:28px;background:#2c3034;"></div>
<div style="left:451px;top:471px;width:1px;height:28px;background:#596066;"></div>
<div style="left:531px;top:471px;width:1px;height:28px;background:#2c3034;"></div>
<div style="left:532px;top:471px;width:1px;height:28px;background:#596066;"></div>
<span class="t n" style="top:476.8px;left:456.00px;color:#e8eaec;">Type</span>
<span class="t n" style="top:476.8px;left:536.00px;color:#e8eaec;transform:scaleX(1.044);">Alert</span>
<div style="left:447px;top:499px;width:921px;height:1px;background:#000;"></div>
<div style="left:447px;top:500px;width:921px;height:25px;background:#03192e;"></div>
<div style="left:447px;top:499px;width:921px;height:2px;background:#0a78d2;"></div>
<div style="left:447px;top:524px;width:921px;height:1px;background:#0a78d2;"></div>
<span class="t n" style="top:503.7px;left:455.50px;color:#f2f2f2;transform:scaleX(1.026);">Order</span>
<span class="t n" style="top:503.7px;left:536.00px;color:#f2f2f2;transform:scaleX(0.973);">Fill</span>
<span class="t n" style="top:503.7px;left:555.34px;color:#f2f2f2;transform:scaleX(1.016);">percentage</span>
<span class="t n" style="top:503.7px;left:623.50px;color:#f2f2f2;transform:scaleX(1.199);">=</span>
<span class="t n" style="top:503.7px;left:635.95px;color:#f2f2f2;transform:scaleX(0.970);">50%</span>
<span class="t n" style="top:529.53px;left:455.50px;color:#f2f2f2;transform:scaleX(1.005);">Filter</span>
<span class="t n" style="top:529.53px;left:536.00px;color:#f2f2f2;transform:scaleX(1.016);">Current</span>
<span class="t n" style="top:529.53px;left:582.57px;color:#f2f2f2;transform:scaleX(0.969);">care</span>
<span class="t n" style="top:529.53px;left:610.07px;color:#f2f2f2;transform:scaleX(1.018);">orders</span>
<span class="t n" style="top:529.53px;left:650.27px;color:#f2f2f2;transform:scaleX(1.228);">&amp;</span>
<span class="t n" style="top:529.53px;left:664.24px;color:#f2f2f2;transform:scaleX(0.971);">Accessible</span>
<span class="t n" style="top:529.53px;left:726.76px;color:#f2f2f2;transform:scaleX(1.018);">orders</span>
<span class="t n" style="top:555.36px;left:455.50px;color:#f2f2f2;transform:scaleX(0.987);">IOI</span>
<span class="t n" style="top:555.36px;left:536.00px;color:#f2f2f2;transform:scaleX(0.950);">Share</span>
<span class="t n" style="top:555.36px;left:571.75px;color:#f2f2f2;transform:scaleX(1.034);">volume</span>
<span class="t n" style="top:555.36px;left:617.65px;color:#f2f2f2;transform:scaleX(1.199);">&lt;</span>
<span class="t n" style="top:555.36px;left:630.10px;color:#f2f2f2;">50k</span>
<span class="t n" style="top:581.19px;left:455.50px;color:#f2f2f2;transform:scaleX(0.991);">Trade</span>
<span class="t n" style="top:581.19px;left:491.47px;color:#f2f2f2;transform:scaleX(1.026);">advert</span>
<span class="t n" style="top:581.19px;left:536.00px;color:#f2f2f2;transform:scaleX(0.974);">Failed</span>
<span class="t n" style="top:607.02px;left:455.50px;color:#f2f2f2;transform:scaleX(1.026);">Order</span>
<span class="t n" style="top:607.02px;left:536.00px;color:#f2f2f2;transform:scaleX(0.973);">Fill</span>
<span class="t n" style="top:607.02px;left:555.34px;color:#f2f2f2;transform:scaleX(1.016);">percentage</span>
<span class="t n" style="top:607.02px;left:623.50px;color:#f2f2f2;transform:scaleX(1.199);">&gt;=</span>
<span class="t n" style="top:607.02px;left:644.84px;color:#f2f2f2;transform:scaleX(0.970);">60%</span>
<span class="t n" style="top:632.85px;left:455.50px;color:#f2f2f2;transform:scaleX(1.026);">Order</span>
<span class="t n" style="top:632.85px;left:536.00px;color:#f2f2f2;transform:scaleX(0.927);">Risk</span>
<span class="t n" style="top:632.85px;left:562.46px;color:#f2f2f2;transform:scaleX(1.032);">alert</span>
<span class="t n" style="top:658.68px;left:455.50px;color:#f2f2f2;transform:scaleX(1.026);">Order</span>
<span class="t n" style="top:658.68px;left:536.00px;color:#f2f2f2;transform:scaleX(0.973);">Fill</span>
<span class="t n" style="top:658.68px;left:555.34px;color:#f2f2f2;transform:scaleX(1.016);">percentage</span>
<span class="t n" style="top:658.68px;left:623.50px;color:#f2f2f2;transform:scaleX(1.199);">&gt;=</span>
<span class="t n" style="top:658.68px;left:644.84px;color:#f2f2f2;transform:scaleX(0.970);">70%</span>
<div style="left:447px;top:679px;width:921px;height:58px;background:#363b40;"></div>
<div style="left:447px;top:679px;width:921px;height:1px;background:#4d5358;"></div>
<div style="left:455px;top:697px;width:451px;height:26px;border:1px solid #687076;box-sizing:border-box;background:linear-gradient(#4e545a,#444a50);"></div>
<svg style="left:593px;top:704px" width="14" height="14" viewBox="0 0 14 14"><circle cx="7" cy="7" r="5.6" fill="none" stroke="#fff" stroke-width="1.2"/><rect x="4.6" y="4.6" width="4.8" height="4.8" rx="1" fill="#fff"/></svg>
<span class="t b f13n" style="top:701.6px;left:611.50px;transform:scaleX(1.040);">Acknowledge</span>
<span class="t b f13n" style="top:701.6px;left:699.19px;transform:scaleX(1.045);">notification</span>
<div style="left:447px;top:735px;width:921px;height:2px;background:#6c747c;"></div>
<div style="left:886px;top:744px;width:24px;height:2px;background:#8a9096;"></div>
<div style="left:447px;top:752px;width:921px;height:2px;background:#404244;"></div>
<span class="t b f13n" style="top:762px;left:455.50px;transform:scaleX(1.039);">Alert</span>
<span class="t b f13n" style="top:762px;left:488.94px;transform:scaleX(1.026);">condition:</span>
<span class="t n" style="top:787.5px;left:455.50px;color:#f2f2f2;transform:scaleX(0.973);">Fill</span>
<span class="t n" style="top:787.5px;left:474.84px;color:#f2f2f2;transform:scaleX(1.016);">percentage</span>
<span class="t n" style="top:787.5px;left:543.00px;color:#f2f2f2;transform:scaleX(1.199);">&gt;=</span>
<span class="t n" style="top:787.5px;left:564.34px;color:#f2f2f2;transform:scaleX(0.970);">50%</span>
<span class="t b f13n" style="top:822px;left:455.50px;transform:scaleX(1.062);">Order</span>
<span class="t b f13n" style="top:822px;left:495.50px;transform:scaleX(0.994);">details:</span>
<span class="t n" style="top:848px;left:455.50px;color:#a8adb2;transform:scaleX(1.039);">Instrument</span>
<span class="t n" style="top:848px;left:526.50px;color:#f2f2f2;transform:scaleX(0.929);">AAPL</span>
<span class="t n" style="top:869.5px;left:455.50px;color:#a8adb2;transform:scaleX(1.013);">Client</span>
<span class="t n" style="top:869.5px;left:526.50px;color:#f2f2f2;transform:scaleX(0.915);">ABC</span>
<div style="left:752px;top:849px;width:1px;height:39px;background:#50565c;"></div>
<span class="t n" style="top:848px;left:766.00px;color:#a8adb2;transform:scaleX(1.069);">Vol</span>
<span class="t n" style="top:848px;left:788.43px;color:#a8adb2;transform:scaleX(1.079);">ord</span>
<span class="t n" style="top:848px;left:826.00px;color:#f2f2f2;transform:scaleX(0.992);">25</span>
<span class="t n" style="top:869.5px;left:766.00px;color:#a8adb2;transform:scaleX(1.069);">Vol</span>
<span class="t n" style="top:869.5px;left:788.43px;color:#a8adb2;transform:scaleX(1.041);">done</span>
<span class="t n" style="top:869.5px;left:826.00px;color:#f2f2f2;transform:scaleX(0.868);">EUR</span>
<div style="left:447px;top:895px;width:921px;height:69px;background:#363b40;"></div>
<div style="left:455px;top:902px;width:299px;height:26px;border:1px solid #687076;box-sizing:border-box;background:linear-gradient(#4e545a,#444a50);"></div>
<span class="t f13n b" style="top:905.5px;left:582.05px;transform:scaleX(1.060);">Amend</span>
<div style="left:759px;top:902px;width:298px;height:26px;border:1px solid #687076;box-sizing:border-box;background:linear-gradient(#4e545a,#444a50);"></div>
<span class="t f13n b" style="top:905.5px;left:876.11px;transform:scaleX(1.081);">Multi-split</span>
<div style="left:1061px;top:902px;width:299px;height:26px;border:1px solid #687076;box-sizing:border-box;background:linear-gradient(#4e545a,#444a50);"></div>
<span class="t f13n b" style="top:905.5px;left:1180.31px;transform:scaleX(1.060);">Complete</span>
<div style="left:455px;top:932px;width:223px;height:26px;border:1px solid #687076;box-sizing:border-box;background:linear-gradient(#4e545a,#444a50);"></div>
<span class="t f13n b" style="top:935.5px;left:495.76px;transform:scaleX(1.062);">Order</span>
<span class="t f13n b" style="top:935.5px;left:535.77px;transform:scaleX(1.022);">details</span>
<span class="t f13n b" style="top:935.5px;left:580.09px;transform:scaleX(1.028);">summary</span>
<div style="left:683px;top:932px;width:223px;height:26px;border:1px solid #687076;box-sizing:border-box;background:linear-gradient(#4e545a,#444a50);"></div>
<span class="t f13n b" style="top:935.5px;left:782.95px;transform:scaleX(0.924);">Fills</span>
<div style="left:910px;top:932px;width:223px;height:26px;border:1px solid #687076;box-sizing:border-box;background:linear-gradient(#4e545a,#444a50);"></div>
<span class="t f13n b" style="top:935.5px;left:992.85px;transform:scaleX(1.006);">Bookings</span>
<div style="left:1137px;top:932px;width:223px;height:26px;border:1px solid #687076;box-sizing:border-box;background:linear-gradient(#4e545a,#444a50);"></div>
<span class="t f13n b" style="top:935.5px;left:1217.93px;transform:scaleX(1.051);">Audit</span>
<span class="t f13n b" style="top:935.5px;left:1255.37px;transform:scaleX(1.034);">trail</span>
</div></div>
<div class="win" style="left:909px;top:205px;width:703px;height:695px;background:#363b40;border:1px solid #f0803c;box-sizing:border-box;outline:1px solid #06254a;overflow:hidden;">
<div class="win" style="left:-910px;top:-206px;width:1700px;height:966px;">
<svg style="left:1468px;top:220.5px" width="12" height="12" viewBox="0 0 12 12"><path d="M1.12 6 H10.879999999999999" stroke="#ececec" stroke-width="1.5"/></svg>
<svg style="left:1523.3px;top:218.5px" width="16" height="16" viewBox="0 0 16 16"><path d="M1.6559999999999997 14.344000000000001 L14.344000000000001 1.6559999999999997 M9.220000000000002 1.6559999999999997 H14.344000000000001 V6.779999999999999 M1.6559999999999997 9.220000000000002 V14.344000000000001 H6.779999999999999" fill="none" stroke="#ececec" stroke-width="1.5"/></svg>
<svg style="left:1581.5px;top:220.5px" width="12" height="12" viewBox="0 0 12 12"><path d="M1.12 1.12 L10.879999999999999 10.879999999999999 M10.879999999999999 1.12 L1.12 10.879999999999999" stroke="#ececec" stroke-width="1.4"/></svg>
<span class="t b d2b" style="top:252px;left:1082.19px;transform:scaleX(1.033);">Current</span>
<span class="t b d2b" style="top:252px;left:1142.00px;transform:scaleX(1.010);">care</span>
<span class="t b d2b" style="top:252px;left:1177.32px;transform:scaleX(1.022);">orders</span>
<span class="t b d2b" style="top:252px;left:1228.95px;transform:scaleX(0.965);">|</span>
<span class="t b d2b" style="top:252px;left:1237.51px;transform:scaleX(0.979);">Accessible</span>
<span class="t b d2b" style="top:252px;left:1317.81px;transform:scaleX(1.022);">orders</span>
<span class="t b d2b" style="top:252px;left:1369.44px;transform:scaleX(0.965);">|</span>
<span class="t b d2b" style="top:252px;left:1378.01px;transform:scaleX(1.031);">Parent</span>
<span class="t b d2b" style="top:252px;left:1430.06px;transform:scaleX(1.022);">orders</span>
<span class="t b d2b" style="top:252px;left:1481.68px;transform:scaleX(0.965);">|</span>
<span class="t b d2b" style="top:252px;left:1490.25px;">Entered:</span>
<span class="t b d2b" style="top:252px;left:1555.09px;transform:scaleX(1.057);">Today</span>
<div style="left:921px;top:342px;width:680px;height:2px;background:#7b8187;"></div>
<div style="left:921px;top:385px;width:680px;height:56px;border:1px solid #6c7278;box-sizing:border-box;"></div>
<div style="left:1100px;top:398px;width:308px;height:30px;background:#000;border:1px solid #6c7278;box-sizing:border-box;"></div>
<div style="left:1418px;top:398px;width:139px;height:30px;background:#000;border:1px solid #6c7278;box-sizing:border-box;"></div>
<span class="t d2" style="top:403.5px;left:1423.00px;color:#727a83;transform:scaleX(1.075);">Input</span>
<span class="t d2" style="top:403.5px;left:1463.08px;color:#727a83;">value</span>
<span class="t d2" style="top:403px;left:1536.00px;color:#fff;transform:scaleX(0.947);">%</span>
<div style="left:921px;top:493px;width:680px;height:356px;border:1px solid #6c7278;box-sizing:border-box;"></div>
<svg style="left:953px;top:639.5px" width="22" height="22" viewBox="-11 -11 22 22"><circle r="9.5" fill="#3a3939" stroke="#5e6062" stroke-width="1.2"/><circle r="4.8" fill="#7c7e80"/></svg>
<span class="t d2" style="top:640.5px;left:980.00px;color:#dfe1e3;transform:scaleX(1.037);">“Order</span>
<span class="t d2" style="top:640.5px;left:1029.16px;color:#dfe1e3;transform:scaleX(1.056);">notifications”</span>
<span class="t d2" style="top:640.5px;left:1122.34px;color:#dfe1e3;transform:scaleX(1.020);">section</span>
<span class="t d2" style="top:640.5px;left:1175.04px;color:#dfe1e3;transform:scaleX(1.067);">in</span>
<span class="t d2" style="top:640.5px;left:1191.73px;color:#dfe1e3;transform:scaleX(1.028);">“Alerts”</span>
<span class="t d2" style="top:640.5px;left:1245.67px;color:#dfe1e3;transform:scaleX(1.076);">toolbar</span>
<span class="t d2" style="top:640.5px;left:1299.24px;color:#dfe1e3;transform:scaleX(1.103);">button</span>
<svg style="left:953px;top:670.5px" width="22" height="22" viewBox="-11 -11 22 22"><circle r="9.5" fill="#3a3939" stroke="#5e6062" stroke-width="1.2"/></svg>
<span class="t d2" style="top:671.5px;left:980.00px;color:#dfe1e3;transform:scaleX(1.008);">Standalone</span>
<span class="t d2" style="top:671.5px;left:1060.73px;color:#dfe1e3;transform:scaleX(1.037);">“Order</span>
<span class="t d2" style="top:671.5px;left:1109.89px;color:#dfe1e3;transform:scaleX(1.056);">notifications”</span>
<span class="t d2" style="top:671.5px;left:1203.07px;color:#dfe1e3;transform:scaleX(1.103);">button</span>
<span class="t d2" style="top:671.5px;left:1253.32px;color:#dfe1e3;transform:scaleX(1.067);">in</span>
<span class="t d2" style="top:671.5px;left:1270.01px;color:#dfe1e3;transform:scaleX(1.076);">toolbar</span>
<div style="left:934px;top:701.5px;width:654px;height:1.5px;background:#90969c;"></div>
<span class="t b d2b" style="top:715px;left:934.00px;transform:scaleX(1.029);">Sound</span>
<span class="t b d2b" style="top:715px;left:985.93px;transform:scaleX(1.014);">settings</span>
<div style="left:934px;top:744.5px;width:20px;height:20px;background:#020b1c;border:1px solid #566480;box-sizing:border-box;border-radius:2.5px;"></div>
<span class="t d2" style="top:745px;left:960.00px;color:#f2f2f2;transform:scaleX(1.009);">Sound</span>
<div style="left:954px;top:775px;width:371px;height:30px;background:#1c1e20;border:1px solid #6c7278;box-sizing:border-box;"></div>
<span class="t d2" style="top:781px;left:960.00px;color:#7d848b;transform:scaleX(0.986);">Choose</span>
<span class="t d2" style="top:781px;left:1015.20px;color:#7d848b;transform:scaleX(1.031);">sound</span>
<div style="left:1336px;top:775px;width:41px;height:30px;background:#40464a;"></div>
<svg style="left:1349.2px;top:787.6px" width="14" height="4" viewBox="0 0 14 4"><circle cx="2" cy="2" r="1.4" fill="#8a9096"/><circle cx="6.8" cy="2" r="1.4" fill="#8a9096"/><circle cx="11.6" cy="2" r="1.4" fill="#8a9096"/></svg>
<div style="left:1387px;top:775px;width:44px;height:30px;background:#40464a;"></div>
<svg style="left:1399.55px;top:781.6px" width="18.900000000000002" height="16.8" viewBox="0 0 18 16"><path d="M1.8 5.8 H4.6 L8.8 1.8 V14.2 L4.6 10.2 H1.8 Z" fill="none" stroke="#8a9096" stroke-width="1.5" stroke-linejoin="round"/><path d="M11 2.3 Q17.6 8 11 13.7" fill="none" stroke="#8a9096" stroke-width="1.6"/></svg>
<div style="left:954px;top:817px;width:20px;height:20px;background:#3e4144;border:1px solid #666c72;box-sizing:border-box;border-radius:2px;"></div>
<span class="t d2" style="top:817px;left:980.00px;color:#dfe1e3;transform:scaleX(1.031);">Loop</span>
<span class="t d2" style="top:817px;left:1018.64px;color:#dfe1e3;transform:scaleX(1.031);">sound</span>
<span class="t d2" style="top:817px;left:1064.99px;color:#dfe1e3;transform:scaleX(1.096);">until</span>
<span class="t d2" style="top:817px;left:1099.37px;color:#dfe1e3;transform:scaleX(1.029);">acknowledged</span>
<div style="left:1315px;top:861px;width:136px;height:28px;background:#474d53;"></div>
<span class="t d2" style="top:865.5px;left:1360.47px;color:#f2f2f2;transform:scaleX(0.965);">Cancel</span>
<div style="left:1464px;top:861px;width:136px;height:28px;background:#474d53;"></div>
<span class="t d2" style="top:865.5px;left:1488.41px;color:#f2f2f2;transform:scaleX(0.980);">Create</span>
<span class="t d2" style="top:865.5px;left:1536.78px;color:#f2f2f2;">alerts</span>
</div></div>
<div style="left:1581px;top:875px;width:33px;height:1px;background:#1ac88c;"></div>
<div style="left:1575px;top:872px;width:7px;height:7px;border-radius:50%;background:#1ac88c"></div>
<div class="win" style="left:697px;top:38px;width:703px;height:602px;background:#363b40;border:1px solid #f0803c;box-sizing:border-box;outline:1px solid #06254a;overflow:hidden;">
<div class="win" style="left:-698px;top:-39px;width:1700px;height:966px;">
<svg style="left:707px;top:46.3px" width="26" height="26" viewBox="-13 -13 26 26"><circle r="12" fill="#f97c1c"/><circle r="7.20" fill="#000"/><circle r="2.58" fill="#f97c1c"/></svg>
<span class="t b d1t" style="top:50px;left:742.00px;transform:scaleX(1.033);">Create</span>
<span class="t b d1t" style="top:50px;left:791.67px;transform:scaleX(1.043);">alert</span>
<svg style="left:1263px;top:53px" width="12" height="12" viewBox="0 0 12 12"><path d="M1.3200000000000003 6 H10.68" stroke="#ececec" stroke-width="1.5"/></svg>
<svg style="left:1315.3px;top:51px" width="16" height="16" viewBox="0 0 16 16"><path d="M1.9160000000000004 14.084 L14.084 1.9160000000000004 M9.17 1.9160000000000004 H14.084 V6.83 M1.9160000000000004 9.17 V14.084 H6.83" fill="none" stroke="#ececec" stroke-width="1.5"/></svg>
<svg style="left:1371px;top:53px" width="12" height="12" viewBox="0 0 12 12"><path d="M1.3200000000000003 1.3200000000000003 L10.68 10.68 M10.68 1.3200000000000003 L1.3200000000000003 10.68" stroke="#ececec" stroke-width="1.4"/></svg>
<span class="t d1" style="top:81.5px;left:708.00px;color:#a8aeb4;transform:scaleX(1.028);">Order</span>
<span class="t b d1b" style="top:81.5px;left:848.64px;transform:scaleX(0.960);">AAPL</span>
<span class="t b d1b" style="top:81.5px;left:889.82px;transform:scaleX(0.963);">|</span>
<span class="t b d1b" style="top:81.5px;left:897.96px;transform:scaleX(0.966);">Buy</span>
<span class="t b d1b" style="top:81.5px;left:928.04px;transform:scaleX(0.963);">|</span>
<span class="t b d1b" style="top:81.5px;left:936.19px;transform:scaleX(1.072);">50,000</span>
<span class="t b d1b" style="top:81.5px;left:986.76px;transform:scaleX(0.963);">|</span>
<span class="t b d1b" style="top:81.5px;left:994.90px;transform:scaleX(1.038);">Route</span>
<span class="t b d1b" style="top:81.5px;left:1040.71px;transform:scaleX(1.089);">To</span>
<span class="t b d1b" style="top:81.5px;left:1062.67px;transform:scaleX(0.991);">Blackbox</span>
<span class="t b d1b" style="top:81.5px;left:1129.17px;transform:scaleX(1.045);">Algo</span>
<span class="t b d1b" style="top:81.5px;left:1166.25px;transform:scaleX(0.963);">|</span>
<span class="t b d1b" style="top:81.5px;left:1174.40px;transform:scaleX(1.024);">Prudelity</span>
<span class="t b d1b" style="top:81.5px;left:1240.50px;transform:scaleX(0.963);">|</span>
<span class="t b d1b" style="top:81.5px;left:1248.65px;transform:scaleX(1.091);">24</span>
<span class="t b d1b" style="top:81.5px;left:1270.11px;transform:scaleX(1.111);">Mar</span>
<span class="t b d1b" style="top:81.5px;left:1302.30px;transform:scaleX(1.032);">01:02:23</span>
<span class="t b d1b" style="top:81.5px;left:1364.87px;transform:scaleX(1.093);">PM</span>
<div style="left:708px;top:110px;width:681px;height:2px;background:#7b8187;"></div>
<span class="t b d1b" style="top:122.5px;left:708.00px;transform:scaleX(1.050);">Trigger</span>
<span class="t b d1b" style="top:122.5px;left:762.56px;transform:scaleX(1.045);">condition</span>
<div style="left:708px;top:151px;width:681px;height:53px;border:1px solid #6c7278;box-sizing:border-box;"></div>
<div style="left:720px;top:163px;width:279px;height:29px;background:#000;border:1px solid #6c7278;box-sizing:border-box;"></div>
<span class="t d1" style="top:168.5px;left:725.00px;color:#f2f2f2;transform:scaleX(0.975);">Fill</span>
<span class="t d1" style="top:168.5px;left:746.83px;color:#f2f2f2;transform:scaleX(1.019);">percentage</span>
<svg style="left:978.0px;top:169.5px" width="15.0" height="15.0" viewBox="0 0 15.0 15.0"><path d="M2 4.75 L7.5 10.25 L13.0 4.75" fill="none" stroke="#fff" stroke-width="1.6"/></svg>
<div style="left:1009px;top:163px;width:161px;height:29px;background:#000;border:1px solid #6c7278;box-sizing:border-box;"></div>
<span class="t d1" style="top:168.5px;left:1014.00px;color:#727a83;transform:scaleX(0.967);">Select</span>
<span class="t d1" style="top:168.5px;left:1056.45px;color:#727a83;transform:scaleX(1.070);">condition</span>
<svg style="left:1149.0px;top:169.5px" width="15.0" height="15.0" viewBox="0 0 15.0 15.0"><path d="M2 4.75 L7.5 10.25 L13.0 4.75" fill="none" stroke="#fff" stroke-width="1.6"/></svg>
<div style="left:1180px;top:163px;width:132px;height:29px;background:#000;border:1px solid #6c7278;box-sizing:border-box;"></div>
<span class="t d1" style="top:168.5px;left:1185.00px;color:#727a83;transform:scaleX(1.072);">Input</span>
<span class="t d1" style="top:168.5px;left:1223.11px;color:#727a83;transform:scaleX(0.995);">value</span>
<span class="t d1" style="top:167.5px;left:1291.50px;color:#fff;transform:scaleX(0.944);">%</span>
<span class="t b d1b" style="top:225px;left:708.00px;transform:scaleX(1.059);">Notification</span>
<span class="t b d1b" style="top:225px;left:794.46px;transform:scaleX(1.012);">settings</span>
<div style="left:708px;top:254px;width:681px;height:339px;border:1px solid #6c7278;box-sizing:border-box;"></div>
<span class="t b d1b" style="top:266.5px;left:720.00px;transform:scaleX(1.009);">Display</span>
<span class="t b d1b" style="top:266.5px;left:774.97px;transform:scaleX(1.012);">settings</span>
<div style="left:720px;top:295px;width:20px;height:20px;background:#0a94ff;border-radius:2px;"></div>
<svg style="left:723px;top:298px" width="14" height="14" viewBox="0 0 14 14"><path d="M2.6 7.8 L5.4 10.4 L10.6 4.4" fill="none" stroke="#04101e" stroke-width="1.5"/></svg>
<span class="t b d1b" style="top:295.5px;left:744.50px;transform:scaleX(1.015);">Show</span>
<span class="t b d1b" style="top:295.5px;left:787.01px;transform:scaleX(1.005);">“Notifications”</span>
<span class="t b d1b" style="top:295.5px;left:891.32px;transform:scaleX(1.054);">grid</span>
<div style="left:740px;top:324px;width:19px;height:20px;background:#020b1c;border:1px solid #525e78;box-sizing:border-box;border-radius:2px;"></div>
<span class="t d1" style="top:324.5px;left:764.00px;color:#f2f2f2;transform:scaleX(0.952);">Set</span>
<span class="t d1" style="top:324.5px;left:788.45px;color:#f2f2f2;transform:scaleX(1.009);">focus</span>
<span class="t d1" style="top:324.5px;left:826.95px;color:#f2f2f2;transform:scaleX(1.138);">to</span>
<span class="t d1" style="top:324.5px;left:844.53px;color:#f2f2f2;transform:scaleX(1.088);">grid</span>
<div style="left:720px;top:359px;width:20px;height:20px;background:#020b1c;border:1px solid #525e78;box-sizing:border-box;border-radius:2px;"></div>
<span class="t d1" style="top:359px;left:744.50px;color:#f2f2f2;transform:scaleX(0.935);">Flash</span>
<span class="t d1" style="top:359px;left:781.20px;color:#f2f2f2;transform:scaleX(1.100);">button</span>
<span class="t d1" style="top:359px;left:828.97px;color:#f2f2f2;transform:scaleX(1.064);">in</span>
<span class="t d1" style="top:359px;left:844.84px;color:#f2f2f2;transform:scaleX(1.073);">toolbar</span>
<div style="left:912px;top:354px;width:61px;height:29px;background:#4b5157;border:1px solid #8c9399;box-sizing:border-box;"></div>
<svg style="left:922px;top:359.3px" width="18" height="19" viewBox="0 0 18 19"><path d="M3 8.3 L8 3.3 L13.2 8.5 L8.2 13.2 Z" fill="#fff"/><path d="M6.3 6.6 L8.3 4.9 L10.3 6.6 Z" fill="#4b5157"/><path d="M9.6 5 L5.8 1.2" stroke="#fff" stroke-width="1.4"/><circle cx="14.6" cy="11.4" r="1.6" fill="#fff"/><rect x="2" y="14.2" width="15" height="3.6" fill="#08c464"/></svg>
<svg style="left:947px;top:361px" width="14" height="14" viewBox="0 0 14 14"><path d="M2 4.5 L7 9.5 L12 4.5" fill="none" stroke="#fff" stroke-width="1.6"/></svg>
<svg style="left:738.5px;top:392.5px" width="21.0" height="21.0" viewBox="-10.5 -10.5 21.0 21.0"><circle r="9.0" fill="#3a3939" stroke="#5e6062" stroke-width="1.2"/><circle r="4.6" fill="#7c7e80"/></svg>
<span class="t d1" style="top:393px;left:764.00px;color:#dfe1e3;transform:scaleX(1.034);">“Order</span>
<span class="t d1" style="top:393px;left:810.74px;color:#dfe1e3;transform:scaleX(1.054);">notifications”</span>
<span class="t d1" style="top:393px;left:899.33px;color:#dfe1e3;transform:scaleX(1.017);">section</span>
<span class="t d1" style="top:393px;left:949.44px;color:#dfe1e3;transform:scaleX(1.064);">in</span>
<span class="t d1" style="top:393px;left:965.30px;color:#dfe1e3;transform:scaleX(1.026);">“Alerts”</span>
<span class="t d1" style="top:393px;left:1016.58px;color:#dfe1e3;transform:scaleX(1.073);">toolbar</span>
<span class="t d1" style="top:393px;left:1067.51px;color:#dfe1e3;transform:scaleX(1.100);">button</span>
<svg style="left:738.5px;top:422.0px" width="21.0" height="21.0" viewBox="-10.5 -10.5 21.0 21.0"><circle r="9.0" fill="#3a3939" stroke="#5e6062" stroke-width="1.2"/></svg>
<span class="t d1" style="top:422.5px;left:764.00px;color:#dfe1e3;transform:scaleX(1.005);">Standalone</span>
<span class="t d1" style="top:422.5px;left:840.75px;color:#dfe1e3;transform:scaleX(1.034);">“Order</span>
<span class="t d1" style="top:422.5px;left:887.49px;color:#dfe1e3;transform:scaleX(1.054);">notifications”</span>
<span class="t d1" style="top:422.5px;left:976.08px;color:#dfe1e3;transform:scaleX(1.100);">button</span>
<span class="t d1" style="top:422.5px;left:1023.86px;color:#dfe1e3;transform:scaleX(1.064);">in</span>
<span class="t d1" style="top:422.5px;left:1039.72px;color:#dfe1e3;transform:scaleX(1.073);">toolbar</span>
<div style="left:720px;top:452px;width:657px;height:1px;background:#8a9096;"></div>
<span class="t b d1b" style="top:464px;left:720.00px;transform:scaleX(1.027);">Sound</span>
<span class="t b d1b" style="top:464px;left:769.37px;transform:scaleX(1.012);">settings</span>
<div style="left:720px;top:493px;width:20px;height:19px;background:#020b1c;border:1px solid #525e78;box-sizing:border-box;border-radius:2px;"></div>
<span class="t d1" style="top:492.5px;left:744.50px;color:#f2f2f2;transform:scaleX(1.006);">Sound</span>
<div style="left:740px;top:522px;width:352px;height:29px;background:#1c1e20;border:1px solid #6c7278;box-sizing:border-box;"></div>
<span class="t d1" style="top:527.5px;left:745.00px;color:#7d848b;transform:scaleX(0.983);">Choose</span>
<span class="t d1" style="top:527.5px;left:797.48px;color:#7d848b;transform:scaleX(1.028);">sound</span>
<div style="left:1101px;top:522px;width:40px;height:29px;background:#40464a;"></div>
<svg style="left:1114.8px;top:534px" width="13" height="4" viewBox="0 0 13 4"><circle cx="2" cy="2" r="1.3" fill="#8a9096"/><circle cx="6.5" cy="2" r="1.3" fill="#8a9096"/><circle cx="11" cy="2" r="1.3" fill="#8a9096"/></svg>
<div style="left:1150px;top:522px;width:43px;height:29px;background:#40464a;"></div>
<svg style="left:1162.5px;top:528.5px" width="18.0" height="16.0" viewBox="0 0 18 16"><path d="M1.8 5.8 H4.6 L8.8 1.8 V14.2 L4.6 10.2 H1.8 Z" fill="none" stroke="#8a9096" stroke-width="1.5" stroke-linejoin="round"/><path d="M11 2.3 Q17.6 8 11 13.7" fill="none" stroke="#8a9096" stroke-width="1.6"/></svg>
<div style="left:740px;top:561px;width:19px;height:19px;background:#3e4144;border:1px solid #666c72;box-sizing:border-box;border-radius:2px;"></div>
<span class="t d1" style="top:561px;left:764.00px;color:#dfe1e3;transform:scaleX(1.029);">Loop</span>
<span class="t d1" style="top:561px;left:800.74px;color:#dfe1e3;transform:scaleX(1.028);">sound</span>
<span class="t d1" style="top:561px;left:844.81px;color:#dfe1e3;transform:scaleX(1.093);">until</span>
<span class="t d1" style="top:561px;left:877.49px;color:#dfe1e3;transform:scaleX(1.026);">acknowledged</span>
<div style="left:1118px;top:603px;width:129px;height:28px;background:#474d53;"></div>
<span class="t d1" style="top:607.5px;left:1161.08px;color:#f2f2f2;transform:scaleX(0.962);">Cancel</span>
<div style="left:1259px;top:603px;width:129px;height:28px;background:#474d53;"></div>
<span class="t d1" style="top:607.5px;left:1286.12px;color:#f2f2f2;transform:scaleX(0.978);">Create</span>
<span class="t d1" style="top:607.5px;left:1332.11px;color:#f2f2f2;transform:scaleX(1.034);">alert</span>
</div></div>
</body></html>
